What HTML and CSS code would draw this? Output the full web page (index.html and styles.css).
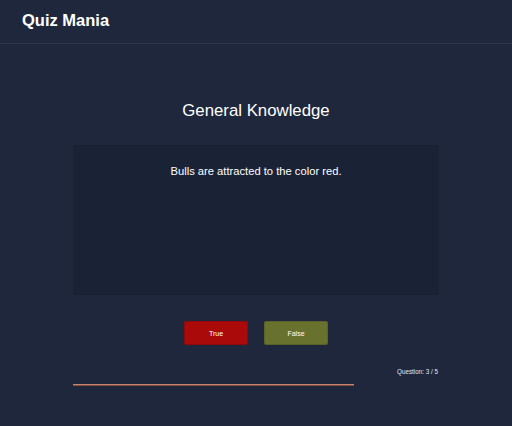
FILE: index.html
```html
<!DOCTYPE html>
<html>
<head>
<meta charset="utf-8">
<link rel="stylesheet" href="styles.css">
</head>
<body>
<header class="topbar">
  <h1 class="brand">Quiz Mania</h1>
</header>
<main class="quiz">
  <h2 class="category">General Knowledge</h2>
  <section class="card">
    <p class="question">Bulls are attracted to the color red.</p>
  </section>
  <div class="answers">
    <button class="btn btn-true">True</button>
    <button class="btn btn-false">False</button>
  </div>
  <div class="status">
    <span class="counter">Question: 3 / 5</span>
  </div>
  <div class="progress"><div class="progress-fill"></div></div>
</main>
</body>
</html>
```

FILE: styles.css
```css
* { box-sizing: border-box; }
html, body {
  margin: 0;
  padding: 0;
  height: 100%;
}
body {
  background: #1e273b;
  font-family: "Liberation Sans", Arial, sans-serif;
  color: #ffffff;
}
.topbar {
  height: 44px;
  border-bottom: 1px solid #2a3a55;
  display: flex;
  align-items: center;
  padding-left: 22px;
}
.brand {
  margin: 0;
  font-size: 16.5px;
  font-weight: bold;
  line-height: 1;
  position: relative;
  top: -1px;
}
.quiz {
  width: 366px;
  margin: 0 auto;
  display: flex;
  flex-direction: column;
  align-items: stretch;
}
.category {
  margin: 56px 0 0;
  font-size: 16.8px;
  font-weight: normal;
  text-align: center;
  line-height: 22px;
}
.card {
  margin-top: 23px;
  height: 150px;
  background: #1a2336;
  padding-top: 19px;
}
.question {
  margin: 0;
  font-size: 11.2px;
  text-align: center;
  line-height: 14px;
}
.answers {
  margin-top: 26px;
  display: flex;
  justify-content: center;
  gap: 16px;
}
.btn {
  width: 64px;
  height: 24px;
  border: 1px solid rgba(0,0,0,0.15);
  border-radius: 2px;
  color: #ffffff;
  font-family: "Liberation Sans", Arial, sans-serif;
  font-size: 7px;
  padding: 0;
}
.btn-true { background: #ab0a0a; }
.btn-false { background: #69712f; }
.status {
  margin-top: 22px;
  display: flex;
  justify-content: flex-end;
  padding-right: 1px;
}
.counter {
  font-size: 6.3px;
  line-height: 10px;
  color: #e6e8ee;
}
.progress {
  margin-top: 7px;
  height: 2px;
  width: 100%;
}
.progress-fill {
  width: 281px;
  height: 2px;
  background: linear-gradient(#c08672 0 50%, #8a4a3a 50% 100%);
}
```
